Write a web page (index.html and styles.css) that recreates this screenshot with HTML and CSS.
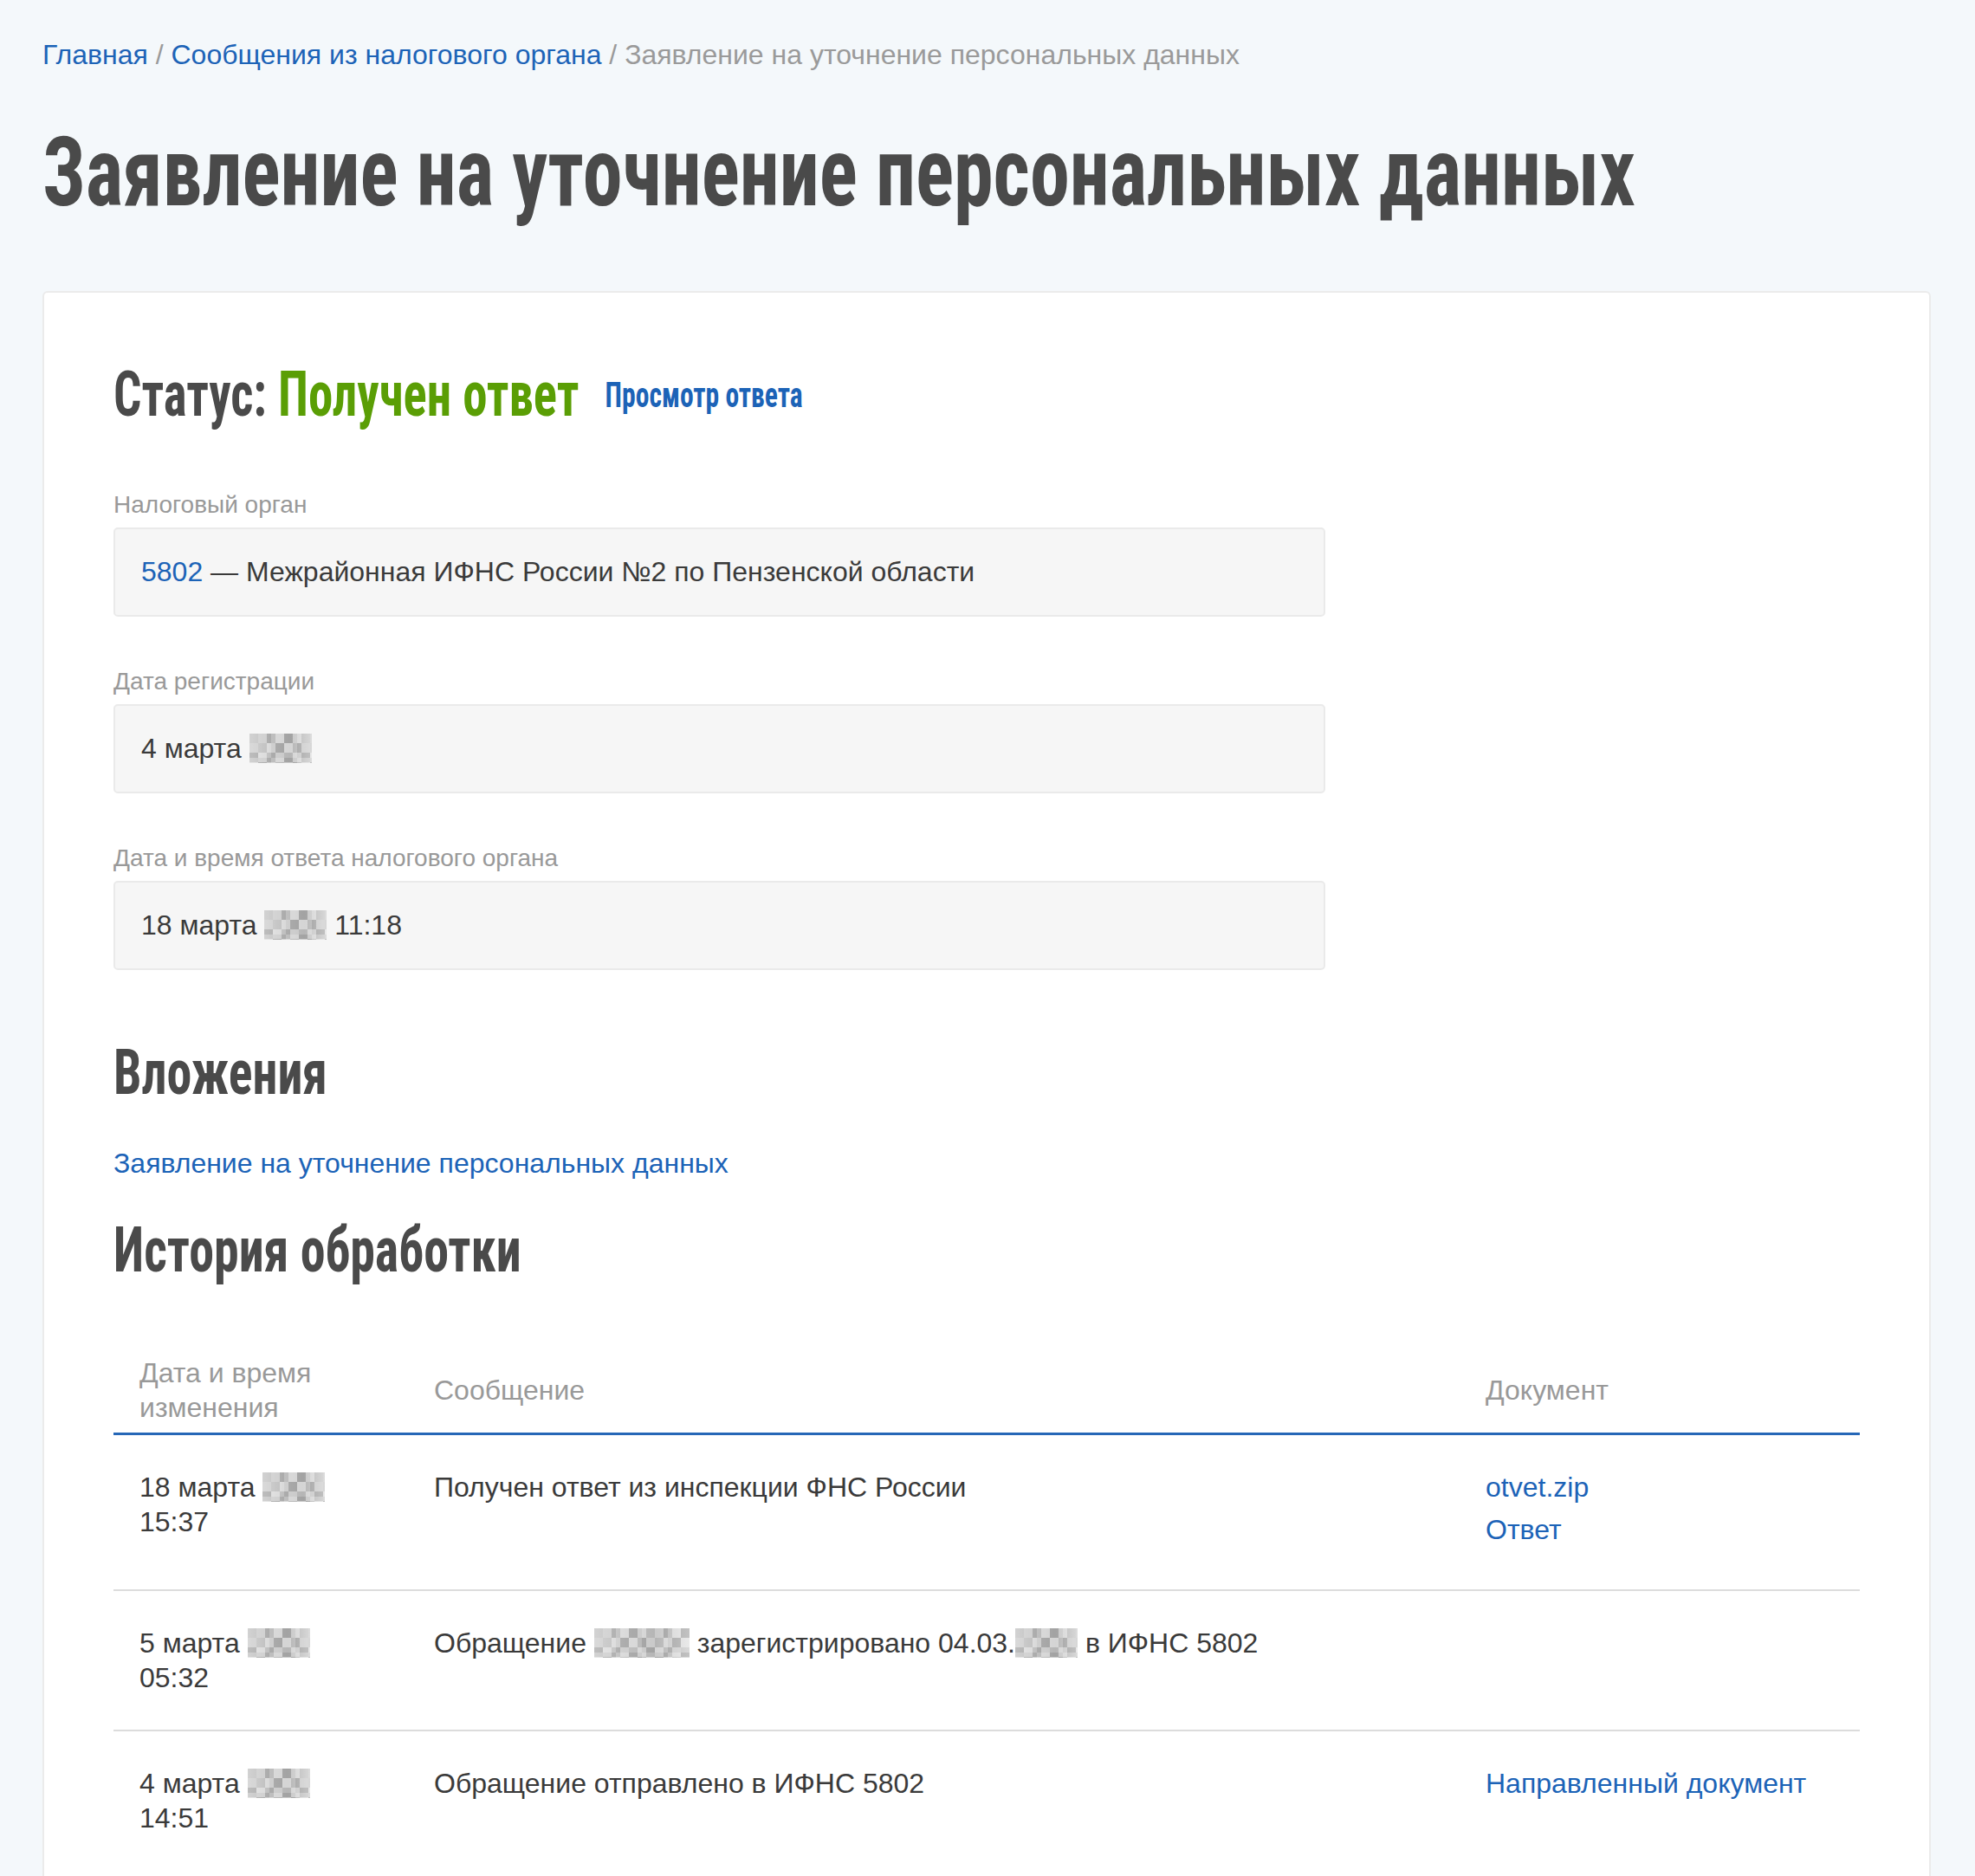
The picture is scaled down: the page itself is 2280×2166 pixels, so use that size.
FILE: index.html
```html
<!DOCTYPE html>
<html lang="ru">
<head>
<meta charset="utf-8">
<title>Заявление на уточнение персональных данных</title>
<link rel="stylesheet" href="styles.css">
</head>
<body>
<div class="page">
  <nav class="breadcrumbs">
    <a href="#">Главная</a><span class="sep"> / </span><a href="#">Сообщения из налогового органа</a><span class="sep"> / </span><span class="current">Заявление на уточнение персональных данных</span>
  </nav>

  <h1 class="page-title"><span class="cond">Заявление на уточнение персональных данных</span></h1>

  <section class="card">
    <h2 class="status"><span class="cond">Статус: <span class="status-value">Получен ответ</span><a class="status-link" href="#">Просмотр ответа</a></span></h2>

    <div class="field">
      <div class="field-label">Налоговый орган</div>
      <div class="field-box"><a href="#">5802</a> — Межрайонная ИФНС России №2 по Пензенской области</div>
    </div>

    <div class="field">
      <div class="field-label">Дата регистрации</div>
      <div class="field-box">4 марта <span class="blur blur-year"></span></div>
    </div>

    <div class="field">
      <div class="field-label">Дата и время ответа налогового органа</div>
      <div class="field-box">18 марта <span class="blur blur-year"></span> 11:18</div>
    </div>

    <h2 class="section-title"><span class="cond">Вложения</span></h2>
    <div class="attachment"><a href="#">Заявление на уточнение персональных данных</a></div>

    <h2 class="section-title history-title"><span class="cond">История обработки</span></h2>

    <table class="history">
      <colgroup><col class="c-date"><col class="c-msg"><col class="c-doc"></colgroup>
      <thead>
        <tr><th>Дата и время<br>изменения</th><th>Сообщение</th><th>Документ</th></tr>
      </thead>
      <tbody>
        <tr>
          <td>18 марта <span class="blur blur-year"></span><br>15:37</td>
          <td>Получен ответ из инспекции ФНС России</td>
          <td><a class="doc-link" href="#">otvet.zip</a><a class="doc-link" href="#">Ответ</a></td>
        </tr>
        <tr>
          <td>5 марта <span class="blur blur-year"></span><br>05:32</td>
          <td>Обращение <span class="blur blur-num"></span> зарегистрировано 04.03.<span class="blur blur-year"></span> в ИФНС 5802</td>
          <td></td>
        </tr>
        <tr>
          <td>4 марта <span class="blur blur-year"></span><br>14:51</td>
          <td>Обращение отправлено в ИФНС 5802</td>
          <td><a class="doc-link" href="#">Направленный документ</a></td>
        </tr>
      </tbody>
    </table>
  </section>
</div>
</body>
</html>
```
FILE: styles.css
```css
* { box-sizing: border-box; }

body {
  margin: 0;
  background: #f4f8fb;
  font-family: "Liberation Sans", Arial, sans-serif;
  color: #3a3a3a;
}

a { color: #1c63b7; text-decoration: none; }

.page { padding: 43px 51px 0 49px; }

.breadcrumbs {
  font-size: 32px;
  line-height: 40px;
  color: #9a9a9a;
}

.cond {
  display: inline-block;
  white-space: nowrap;
  transform-origin: 0 50%;
}

.page-title {
  margin: 49px 0 0;
  font-family: "Roboto Condensed", "Liberation Sans", sans-serif;
  font-weight: 700;
  font-size: 112px;
  line-height: 134px;
  color: #4a4a4a;
}
.page-title .cond { transform: scaleX(0.822); }

.card {
  margin-top: 70px;
  background: #fff;
  border: 2px solid #ebebeb;
  border-radius: 6px;
  padding: 75px 80px 80px;
}

.status,
.section-title {
  margin: 0;
  font-family: "Roboto Condensed", "Liberation Sans", sans-serif;
  font-weight: 700;
  font-size: 72px;
  line-height: 86px;
  color: #4a4a4a;
}
.status .cond { transform: scaleX(0.79); }
.section-title .cond { transform: scaleX(0.805); }

.status { margin-bottom: 65px; }

.status-value { color: #5a9e05; }

.status-link {
  margin-left: 38px;
  font-size: 40px;
  vertical-align: 10px;
}

.field { margin-bottom: 57px; }

.field-label {
  font-size: 28px;
  line-height: 36px;
  color: #999;
  margin-bottom: 8px;
}

.field-box {
  width: 1399px;
  background: #f6f6f6;
  border: 2px solid #eaeaea;
  border-radius: 5px;
  padding: 29px 30px;
  font-size: 32px;
  line-height: 41px;
}

.section-title { margin-top: 76px; }

.attachment {
  margin-top: 41px;
  font-size: 32px;
  line-height: 40px;
}

.history-title { margin-top: 38px; }

.blur {
  display: inline-block;
  vertical-align: -6px;
  height: 34px;
  background-color: #bfbfbf;
  background-image:
    repeating-conic-gradient(rgba(255,255,255,.42) 0 25%, transparent 0 50%),
    repeating-conic-gradient(rgba(0,0,0,.10) 0 25%, transparent 0 50%),
    linear-gradient(90deg, rgba(255,255,255,.3), transparent 35%, rgba(0,0,0,.05) 65%, rgba(255,255,255,.4));
  background-size: 20px 22px, 30px 34px, 100% 100%;
  background-position: 0 0, 10px 11px, 0 0;
}
.blur-year { width: 72px; }
.blur-num { width: 110px; }

.history {
  width: 100%;
  margin-top: 78px;
  border-collapse: collapse;
  table-layout: fixed;
  font-size: 32px;
  line-height: 40px;
}

.c-date { width: 340px; }
.c-msg { width: 1214px; }

.history th {
  padding: 0 30px 9px;
  text-align: left;
  font-weight: normal;
  color: #999;
  vertical-align: middle;
  border-bottom: 3px solid #2667b7;
}

.history td {
  padding: 40px 30px;
  vertical-align: top;
  border-bottom: 2px solid #dcdcdc;
}

.history tbody tr:last-child td { border-bottom: none; }

.doc-link {
  display: block;
  margin-bottom: 9px;
}
```
